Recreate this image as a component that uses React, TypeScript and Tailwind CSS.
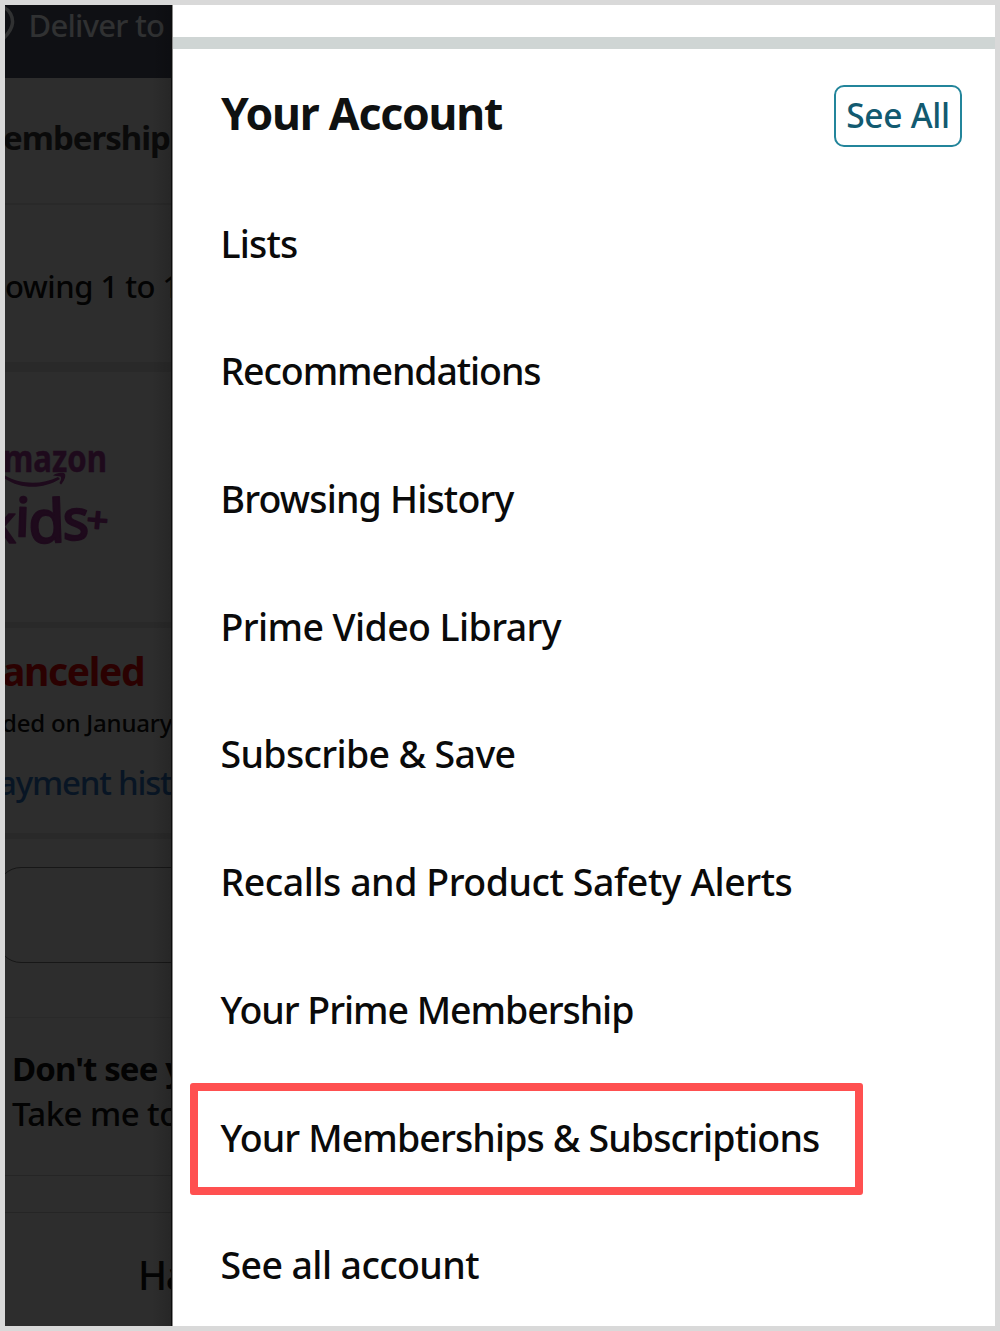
const menu = [
  { label: "Lists", tracking: "tracking-[-0.8px]" },
  { label: "Recommendations", tracking: "tracking-[-1.1px]" },
  { label: "Browsing History", tracking: "tracking-[-0.83px]" },
  { label: "Prime Video Library", tracking: "tracking-[-0.6px]" },
  { label: "Subscribe & Save", tracking: "tracking-[-0.65px]" },
  { label: "Recalls and Product Safety Alerts", tracking: "tracking-[-0.46px]" },
  { label: "Your Prime Membership", tracking: "tracking-[-1.05px]" },
  { label: "Your Memberships & Subscriptions", tracking: "tracking-[-0.88px]", highlighted: true },
  { label: "See all account", tracking: "tracking-[-0.6px]" },
];

function KidsLogo() {
  return (
    <svg width="120" height="110" viewBox="5 440 120 110" fill="#1e0a1c" className="mt-[68px] block font-bold">
      <text x="3" y="471.5" fontSize="37" textLength="104" lengthAdjust="spacingAndGlyphs" stroke="#1e0a1c" strokeWidth="0.5">mazon</text>
      <path d="M4 475 C20 485 42 485 58 477 L60 479 C42 490 20 489 4 478Z" />
      <path d="M53 475.500 C57 472 64 472 65 474 C66 477 64 481 61 484.500 L59.500 483 C61.500 479 61.500 477.500 60.500 476.500 C58.500 476 56 476 53 475.500Z" />
      <g className="font-medium" stroke="#1e0a1c" strokeWidth="1.5" strokeLinejoin="round">
        <text x="-12" y="543" fontSize="54" textLength="28" lengthAdjust="spacingAndGlyphs">k</text>
        <text x="15" y="536.5" fontSize="54" textLength="15" lengthAdjust="spacingAndGlyphs" transform="rotate(2 23 520)">i</text>
        <text x="28" y="543" fontSize="60" textLength="37" lengthAdjust="spacingAndGlyphs" transform="rotate(-2 45 520)">d</text>
        <text x="62.5" y="539.5" fontSize="58" textLength="27" lengthAdjust="spacingAndGlyphs">s</text>
        <text x="86.5" y="532.5" fontSize="35" textLength="22" lengthAdjust="spacingAndGlyphs" transform="rotate(5 98 520)">+</text>
      </g>
    </svg>
  );
}

function DimmedPage() {
  return (
    <div className="relative flex h-full w-[167px] shrink-0 flex-col overflow-hidden whitespace-nowrap bg-[#2d2d2d] text-[#030303]">
      <header className="flex h-[73px] shrink-0 items-start bg-[#0f1014] text-[31px] font-medium leading-[40px] text-[#303132]">
        <svg width="12" height="40" viewBox="0 0 12 40" fill="none" stroke="#303132" strokeWidth="3.5" className="shrink-0">
          <path d="M-2 2 C5 5 8 12 7.500 18 C7 24 4 28 -2 34" />
        </svg>
        <span className="ml-[11.5px] tracking-[-0.75px]">Deliver to</span>
      </header>
      <div className="h-[125px] shrink-0 pt-[40px] text-[33px] font-bold leading-[40px] tracking-[-1px] text-[#0a0a0a]">
        <p className="-ml-[2px]">emberships</p>
      </div>
      <div className="h-[2px] shrink-0 bg-[#292929]" />
      <div className="h-[157px] shrink-0 pt-[61px] text-[31px] font-medium leading-[40px] tracking-[-0.5px]">
        <p>owing 1 to 1</p>
      </div>
      <div className="h-[10px] shrink-0 bg-[#292929]" />
      <div className="h-[250px] shrink-0">
        <KidsLogo />
      </div>
      <div className="h-[6px] shrink-0 bg-[#292929]" />
      <div className="h-[205px] shrink-0 pt-[18px]">
        <p className="-ml-[3px] text-[39px] font-bold leading-[50px] tracking-[-1.35px] text-[#2b0101]">anceled</p>
        <p className="-ml-[3px] mt-[7px] text-[24px] font-medium leading-[40px] tracking-[-0.2px]">ded on January</p>
        <p className="-ml-[7px] mt-[20px] text-[33px] font-medium leading-[40px] tracking-[-1.2px] text-[#081524]">ayment history</p>
      </div>
      <div className="h-[6px] shrink-0 bg-[#292929]" />
      <div className="h-[178px] shrink-0 pt-[28px]">
        <div className="-ml-[8px] h-[96px] w-[300px] rounded-[24px] border-[1.5px] border-[#171717]" />
      </div>
      <div className="h-px shrink-0 bg-[#292929]" />
      <div className="h-[157px] shrink-0 pl-[7px] pt-[28px] text-[33px] leading-[45px]">
        <p className="font-bold tracking-[-0.9px]">Don't see your</p>
        <p className="font-medium tracking-[-0.55px]">Take me to</p>
      </div>
      <div className="h-px shrink-0 bg-[#252525]" />
      <div className="h-[36px] shrink-0" />
      <div className="h-px shrink-0 bg-[#252525]" />
      <p className="pl-[133px] pt-[37px] text-[39px] font-medium leading-[50px] tracking-[-1.5px]">Ha</p>
      <div className="absolute inset-y-0 right-0 w-[20px] bg-gradient-to-r from-transparent to-black/15" />
      <div className="absolute inset-y-0 right-0 w-px bg-[#0c0c0c]" />
    </div>
  );
}

export default function App() {
  return (
    <div className="flex h-[1331px] w-[1000px] overflow-hidden border-[5px] border-[#d9d9d9] bg-white font-['Noto_Sans',sans-serif]">
      <DimmedPage />
      <div className="w-px shrink-0 bg-[#8a8a8a]" />
      <main className="flex h-full min-w-0 flex-1 flex-col overflow-hidden bg-white">
        <div className="h-[32px] shrink-0" />
        <div className="h-[12px] shrink-0 bg-[#cfd5d4]" />
        <div className="flex h-[131px] shrink-0 items-start justify-between pl-[48px] pr-[33px]">
          <h1 className="mt-[34px] text-[44.5px] font-bold leading-[60px] tracking-[-1.2px] text-[#0f1111]">Your Account</h1>
          <button className="mt-[35.5px] flex h-[62px] w-[128px] items-center justify-center rounded-[10px] border-2 border-[#23859b] pb-px text-[33.5px] font-medium leading-[40px] tracking-[-0.3px] text-[#125a70]">
            See All
          </button>
        </div>
        <ul className="shrink-0 text-[37.5px] font-medium text-[#0a0a0a]">
          {menu.map((item) => (
            <li key={item.label} className="relative flex h-[127.7px] items-center whitespace-nowrap pl-[47.5px]">
              <span className={item.tracking}>{item.label}</span>
              {item.highlighted && (
                <span className="absolute left-[17px] top-[9.1px] h-[112px] w-[673px] rounded-[3px] border-8 border-[#ff5050]" />
              )}
            </li>
          ))}
        </ul>
      </main>
    </div>
  );
}
